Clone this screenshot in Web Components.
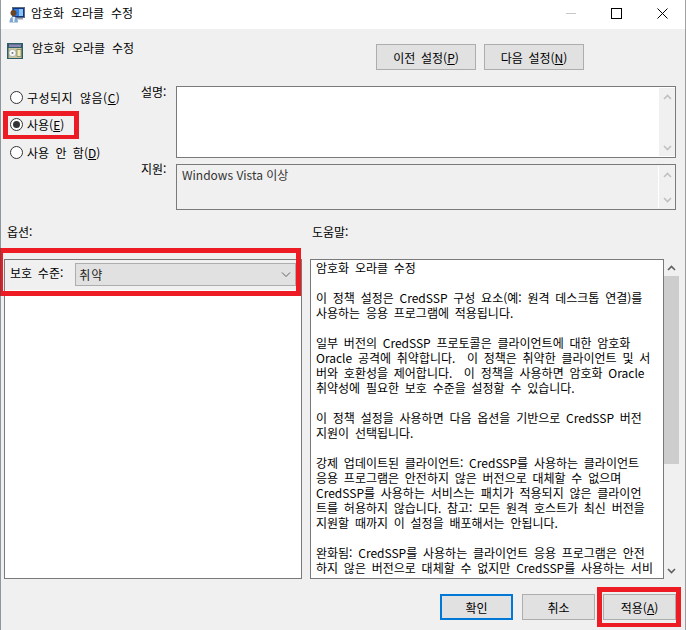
<!DOCTYPE html>
<html lang="ko">
<head>
<meta charset="utf-8">
<title>암호화 오라클 수정</title>
<style>
html, body { margin: 0; padding: 0; }
body { font: 12px "Noto Sans CJK KR", "Liberation Sans", sans-serif; color: #000; }
</style>
</head>
<body>
<policy-dialog>
  <span slot="title">암호화 오라클 수정</span>
  <span slot="heading">암호화 오라클 수정</span>
  <help-pane slot="help">암호화 오라클 수정

이 정책 설정은 CredSSP 구성 요소(예: 원격 데스크톱 연결)를
사용하는 응용 프로그램에 적용됩니다.

일부 버전의 CredSSP 프로토콜은 클라이언트에 대한 암호화
Oracle 공격에 취약합니다.  이 정책은 취약한 클라이언트 및 서
버와 호환성을 제어합니다.  이 정책을 사용하면 암호화 Oracle
취약성에 필요한 보호 수준을 설정할 수 있습니다.

이 정책 설정을 사용하면 다음 옵션을 기반으로 CredSSP 버전
지원이 선택됩니다.

강제 업데이트된 클라이언트: CredSSP를 사용하는 클라이언트
응용 프로그램은 안전하지 않은 버전으로 대체할 수 없으며
CredSSP를 사용하는 서비스는 패치가 적용되지 않은 클라이언
트를 허용하지 않습니다. 참고: 모든 원격 호스트가 최신 버전을
지원할 때까지 이 설정을 배포해서는 안됩니다.

완화됨: CredSSP를 사용하는 클라이언트 응용 프로그램은 안전
하지 않은 버전으로 대체할 수 없지만 CredSSP를 사용하는 서비</help-pane>
</policy-dialog>

<script>
const font = '"Noto Sans CJK KR", "Liberation Sans", sans-serif';

class WinButton extends HTMLElement {
  constructor() {
    super();
    this.attachShadow({mode: 'open'});
    this.shadowRoot.innerHTML = `
<style>
:host {
  display: flex;
  align-items: center;
  justify-content: center;
  box-sizing: border-box;
  height: 26px;
  width: var(--w, 73px);
  background: #e1e1e1;
  border: 1px solid #adadad;
  font-size: 12px;
  word-spacing: 2.4px;
}
:host([default]) { border: 2px solid #0078d7; margin-right: 1px; }
</style>
<slot></slot>`;
  }
}
customElements.define('win-button', WinButton);

class WinRadio extends HTMLElement {
  constructor() {
    super();
    this.attachShadow({mode: 'open'});
    this.shadowRoot.innerHTML = `
<style>
:host { display: flex; align-items: center; height: 14px; gap: 4px; white-space: pre; word-spacing: 3px; }
i {
  box-sizing: border-box;
  width: 13px;
  height: 13px;
  border: 1px solid #333;
  border-radius: 50%;
  background: #fff;
  display: flex;
  align-items: center;
  justify-content: center;
}
:host([checked]) i::after {
  content: '';
  width: 7px;
  height: 7px;
  border-radius: 50%;
  background: #333;
}
</style>
<i></i><span><slot></slot></span>`;
  }
}
customElements.define('win-radio', WinRadio);

class ScrollBar extends HTMLElement {
  constructor() {
    super();
    this.attachShadow({mode: 'open'});
    this.shadowRoot.innerHTML = `
<style>
:host {
  display: flex;
  flex-direction: column;
  align-items: center;
  width: 16px;
  background: #f0f0f0;
  flex: none;
}
:host([thumb]) { width: 15px; }
.arrow { flex: none; height: 17px; width: 100%; display: flex; align-items: center; justify-content: center; }
.track { flex: 1; width: 100%; }
:host([thumb]) .track::before { content: ''; display: block; width: 100%; height: var(--thumb, 188px); background: #cdcdcd; }
svg { stroke: #c0c0c0; }
:host([thumb]) svg { stroke: #606060; }
</style>
<div class="arrow"><svg width="9" height="6" viewBox="0 0 9 6" fill="none" stroke-width="1.6"><path d="M1 5l3.5-3.5L8 5"/></svg></div>
<div class="track"></div>
<div class="arrow"><svg width="9" height="6" viewBox="0 0 9 6" fill="none" stroke-width="1.6"><path d="M1 1l3.5 3.5L8 1"/></svg></div>`;
  }
}
customElements.define('scroll-bar', ScrollBar);

class TextBox extends HTMLElement {
  constructor() {
    super();
    this.attachShadow({mode: 'open'});
    this.shadowRoot.innerHTML = `
<style>
:host {
  display: flex;
  box-sizing: border-box;
  border: 1px solid #7a7a7a;
  background: var(--bg, #fff);
  padding: 1px 0 1px 1px;
}
.text { flex: 1; padding: 1px 4px; line-height: 15px; color: #333; }
:host([readonly]) scroll-bar { border-left: 1px solid #fff; }
</style>
<div class="text"><slot></slot></div>
<scroll-bar></scroll-bar>`;
  }
}
customElements.define('text-box', TextBox);

class ComboBox extends HTMLElement {
  constructor() {
    super();
    this.attachShadow({mode: 'open'});
    this.shadowRoot.innerHTML = `
<style>
:host {
  display: flex;
  align-items: center;
  justify-content: space-between;
  box-sizing: border-box;
  height: 23px;
  background: #e1e1e1;
  border: 1px solid #adadad;
  padding: 0 4px 0 3px;
}
span { letter-spacing: 1px; color: #222; }
</style>
<span><slot></slot></span>
<svg width="10" height="6" viewBox="0 0 10 6" fill="none" stroke="#606060" stroke-width="1"><path d="M1 .5l4 4 4-4"/></svg>`;
  }
}
customElements.define('combo-box', ComboBox);

class HelpPane extends HTMLElement {
  constructor() {
    super();
    this.attachShadow({mode: 'open'});
    this.shadowRoot.innerHTML = `
<style>
:host {
  display: flex;
  height: 320px;
  min-width: 0;
}
.box {
  width: 354px;
  box-sizing: border-box;
  border: 1px solid #7a7a7a;
  background: #fff;
  overflow: hidden;
  padding: 0 0 0 5px;
  line-height: 15px;
  white-space: pre;
  word-spacing: 2.4px;
}
</style>
<div class="box"><slot></slot></div>
<scroll-bar thumb></scroll-bar>`;
  }
}
customElements.define('help-pane', HelpPane);

class PolicyDialog extends HTMLElement {
  constructor() {
    super();
    this.attachShadow({mode: 'open'});
    this.shadowRoot.innerHTML = `
<style>
:host {
  display: block;
  position: relative;
  width: 686px;
  height: 630px;
  overflow: hidden;
  background: #f0f0f0;
  font: 12px ${font};
}
:host::after {
  content: '';
  position: absolute;
  inset: 0;
  border-left: 1px solid rgba(60, 80, 90, .55);
  border-right: 1px solid rgba(70, 70, 70, .5);
  pointer-events: none;
}
.titlebar {
  display: flex;
  align-items: center;
  height: 29px;
  background: #fff;
  padding-left: 9px;
  gap: 6px;
}
.titlebar .name { flex: 1; position: relative; top: -2px; word-spacing: 3.5px; }
.caption { display: flex; align-items: center; gap: 35px; padding: 0 18px 3px 0; }
.heading {
  display: flex;
  align-items: flex-start;
  justify-content: space-between;
  box-sizing: border-box;
  height: 57px;
  padding: 14px 102px 0 7px;
}
.heading .left { display: flex; gap: 9px; }
.heading .left span { margin-top: -4px; word-spacing: 3.5px; }
.heading .buttons { display: flex; gap: 8px; --w: 100px; margin-top: 1px; }
.upper {
  display: grid;
  grid-template-columns: 169px 500px;
  height: 124px;
}
.radios { display: flex; flex-direction: column; gap: 13.5px; padding: 4px 0 0 10px; }
.fields {
  display: grid;
  grid-template-columns: 35px 500px;
  grid-template-rows: 72px 46px;
  row-gap: 6px;
  margin-left: -28px;
}
.fields label { line-height: 12px; }
.fields label + text-box + label { margin-top: -1px; }
.section-labels {
  display: grid;
  grid-template-columns: 305px 1fr;
  padding: 13px 0 0 7px;
  height: 49px;
  box-sizing: border-box;
  word-spacing: 2.4px;
}
.panes {
  display: grid;
  grid-template-columns: 298px 371px;
  column-gap: 8px;
  padding-left: 4px;
  height: 320px;
}
.options {
  box-sizing: border-box;
  border: 1px solid #7a7a7a;
  background: #fff;
  height: 320px;
}
.level {
  display: flex;
  align-items: flex-start;
  gap: 12px;
  background: #f0f0f0;
  height: 30px;
  padding: 3px 5px 0;
  box-sizing: border-box;
  word-spacing: 2.4px;
}
.level > span { margin-top: 1px; }
.level combo-box { flex: 1; }
.footer {
  display: flex;
  justify-content: flex-end;
  gap: 8px;
  padding: 15px 10px 0 0;
}
.mark {
  position: absolute;
  box-sizing: border-box;
  border: 5px solid #ed1c24;
  pointer-events: none;
}
u { text-decoration-thickness: 1px; }
</style>
<div class="titlebar">
  <svg width="16" height="16" viewBox="0 0 16 16">
    <rect x="3.5" y="0.5" width="12" height="10" fill="#16357f" stroke="#5a6a80"/>
    <rect x="5" y="2" width="9" height="7" fill="#2f7fe6"/>
    <rect x="10" y="2" width="4" height="7" fill="#8cc4f4"/>
    <rect x="7" y="11" width="7" height="1.5" fill="#9aa4b0"/>
    <circle cx="4.5" cy="6" r="3" fill="#6a4526"/>
    <path d="M0.5 15.5c0-4 1.8-6 4-6s4.500 2 4.500 6z" fill="#7fa6d0"/>
    <path d="M3.500 10h2.500l-.7 5h-1.200z" fill="#eef2f6"/>
  </svg>
  <span class="name"><slot name="title"></slot></span>
  <div class="caption">
    <svg width="10" height="11" viewBox="0 0 10 11"><path d="M0 5.5h10" stroke="#c8c8c8"/></svg>
    <svg width="11" height="11" viewBox="0 0 11 11"><rect x=".5" y=".5" width="10" height="10" fill="none" stroke="#000"/></svg>
    <svg width="11" height="11" viewBox="0 0 11 11"><path d="M.5 .5l10 10M10.500 .5l-10 10" stroke="#000" fill="none"/></svg>
  </div>
</div>
<div class="heading">
  <div class="left">
    <svg width="16" height="16" viewBox="0 0 16 16">
      <rect x="0" y="0" width="16" height="16" fill="#2f5f66"/>
      <rect x="2" y="1.500" width="12" height="2.500" fill="#8f84b8"/>
      <rect x="1.500" y="5" width="13" height="10" fill="#c9c8a0"/>
      <circle cx="5.500" cy="10" r="3.600" fill="#f6f6f6" stroke="#8a8a8a" stroke-width=".5"/>
      <circle cx="5.500" cy="10" r="1" fill="#777"/>
      <rect x="10" y="6.500" width="4" height="7" fill="#f3ecb0" stroke="#6a6a50" stroke-width=".6"/>
    </svg>
    <span><slot name="heading"></slot></span>
  </div>
  <div class="buttons">
    <win-button>이전 설정(<u>P</u>)</win-button>
    <win-button>다음 설정(<u>N</u>)</win-button>
  </div>
</div>
<div class="upper">
  <div class="radios">
    <win-radio style="letter-spacing:.5px">구성되지 않음(<u>C</u>)</win-radio>
    <win-radio checked>사용(<u>E</u>)</win-radio>
    <win-radio>사용 안 함(<u>D</u>)</win-radio>
  </div>
  <div class="fields">
    <label>설명:</label>
    <text-box></text-box>
    <label>지원:</label>
    <text-box readonly style="--bg:#f0f0f0">Windows Vista 이상</text-box>
  </div>
</div>
<div class="section-labels">
  <span>옵션:</span>
  <span>도움말:</span>
</div>
<div class="panes">
  <div class="options">
    <div class="level">
      <span>보호 수준:</span>
      <combo-box>취약</combo-box>
    </div>
  </div>
  <slot name="help"></slot>
</div>
<div class="footer">
  <win-button default>확인</win-button>
  <win-button>취소</win-button>
  <win-button>적용(<u>A</u>)</win-button>
</div>
<div class="mark" style="left:3px;top:111px;width:76px;height:28px;border-bottom-width:4px"></div>
<div class="mark" style="left:-2px;top:248px;width:303px;height:48px"></div>
<div class="mark" style="left:597px;top:587px;width:84px;height:40px;border-bottom-width:4px"></div>`;
  }
}
customElements.define('policy-dialog', PolicyDialog);
</script>
</body>
</html>
